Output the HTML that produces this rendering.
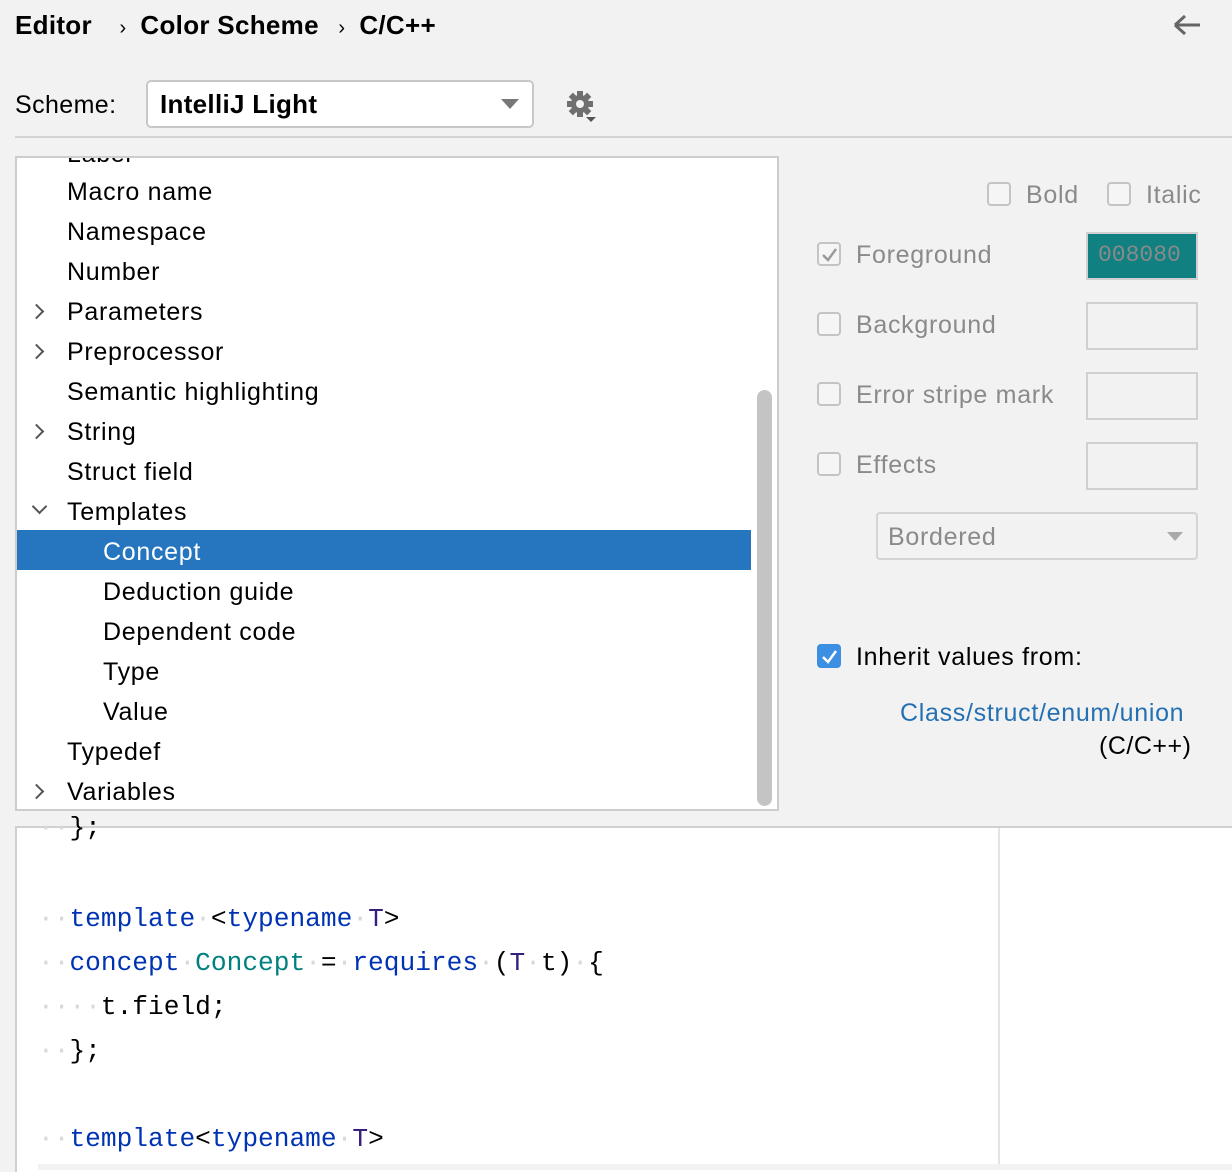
<!DOCTYPE html><html><head><style>
body{margin:0;width:1232px;height:1170px;background:#f2f2f2;font-family:"Liberation Sans",sans-serif;position:relative;overflow:hidden;color:#000}
.a{position:absolute;white-space:nowrap}
.t{font-size:25px;line-height:40px;height:40px;letter-spacing:0.7px}
.cb{position:absolute;width:24px;height:24px;border:2px solid #c4c4c4;border-radius:4px;box-sizing:border-box;background:#f5f5f5}
.g{color:#8a8a8a;font-size:25px;letter-spacing:0.7px}
.sw{position:absolute;width:112px;height:48px;border:2px solid #d0d0d0;box-sizing:border-box}
.code{font-family:"Liberation Mono",monospace;font-size:26.2px;line-height:44px}
.k{color:#0033b3}.p{color:#371f80}.c{color:#008080}.d{color:#d8d8d8}
.chev{position:absolute;width:9px;height:9px;border-right:2px solid #555;border-bottom:2px solid #555}
</style></head><body>
<div class="a" style="left:15px;top:10px;font-size:26px;font-weight:bold;letter-spacing:0.3px">Editor <span style="font-weight:normal;font-size:20px;margin:0 14px 0 20px">›</span>Color Scheme <span style="font-weight:normal;font-size:20px;margin:0 14px 0 12px">›</span>C/C++</div>
<svg class="a" style="left:1172px;top:12px" width="30" height="26"><path d="M3 13H28M3 13L13 4M3 13L13 22" stroke="#666" stroke-width="3" fill="none"/></svg>
<div class="a" style="left:15px;top:91px;font-size:25px;letter-spacing:0.4px">Scheme:</div>
<div class="a" style="left:146px;top:80px;width:388px;height:48px;box-sizing:border-box;border:2px solid #c8c8c8;border-radius:5px;background:#fff"></div>
<div class="a" style="left:160px;top:89px;font-size:26px;font-weight:bold;letter-spacing:0.3px">IntelliJ Light</div>
<svg class="a" style="left:500px;top:98px" width="20" height="12"><path d="M1 1H19L10 11Z" fill="#777"/></svg>
<svg class="a" style="left:565px;top:90px" width="34" height="34"><g transform="translate(15,14)" fill="#6f6f6f"><circle r="9"/><g id="tt"><rect x="-3" y="-13" width="6" height="26"/></g><use href="#tt" transform="rotate(45)"/><use href="#tt" transform="rotate(90)"/><use href="#tt" transform="rotate(135)"/><circle r="4" fill="#f2f2f2"/></g><path d="M21 27H31L26 32Z" fill="#555"/></svg>
<div class="a" style="left:15px;top:136px;width:1217px;height:2px;background:#d4d4d4"></div>

<div class="a" style="left:15px;top:156px;width:764px;height:655px;box-sizing:border-box;border:2px solid #cdcdcd;background:#fff;overflow:hidden">
<div class="a" style="left:0px;top:372px;width:734px;height:40px;background:#2675bf"></div>
<div class="a t" style="left:50px;top:-24px">Label</div>
<div class="a t" style="left:50px;top:14px">Macro name</div>
<div class="a t" style="left:50px;top:54px">Namespace</div>
<div class="a t" style="left:50px;top:94px">Number</div>
<div class="a t" style="left:50px;top:134px">Parameters</div>
<div class="a t" style="left:50px;top:174px">Preprocessor</div>
<div class="a t" style="left:50px;top:214px">Semantic highlighting</div>
<div class="a t" style="left:50px;top:254px">String</div>
<div class="a t" style="left:50px;top:294px">Struct field</div>
<div class="a t" style="left:50px;top:334px">Templates</div>
<div class="a t" style="left:86px;top:374px;color:#fff">Concept</div>
<div class="a t" style="left:86px;top:414px">Deduction guide</div>
<div class="a t" style="left:86px;top:454px">Dependent code</div>
<div class="a t" style="left:86px;top:494px">Type</div>
<div class="a t" style="left:86px;top:534px">Value</div>
<div class="a t" style="left:50px;top:574px">Typedef</div>
<div class="a t" style="left:50px;top:614px">Variables</div>
<div class="chev" style="left:14px;top:148px;transform:rotate(-45deg)"></div>
<div class="chev" style="left:14px;top:188px;transform:rotate(-45deg)"></div>
<div class="chev" style="left:14px;top:268px;transform:rotate(-45deg)"></div>
<div class="chev" style="left:17px;top:343px;transform:rotate(45deg)"></div>
<div class="chev" style="left:14px;top:628px;transform:rotate(-45deg)"></div>
<div class="a" style="left:740px;top:232px;width:15px;height:416px;border-radius:8px;background:#c4c4c4"></div>
</div>

<div class="cb" style="left:987px;top:182px"></div><div class="a g" style="left:1026px;top:181px">Bold</div>
<div class="cb" style="left:1107px;top:182px"></div><div class="a g" style="left:1146px;top:181px">Italic</div>
<div class="cb" style="left:817px;top:242px"></div>
<svg class="a" style="left:820px;top:245px" width="20" height="20"><path d="M3 10L8 15L16 4" stroke="#9a9a9a" stroke-width="2.5" fill="none"/></svg>
<div class="a g" style="left:856px;top:241px">Foreground</div>
<div class="sw" style="left:1086px;top:232px;background:#108080"></div>
<div class="a" style="left:1098px;top:242px;font-family:'Liberation Mono',monospace;font-size:23px;color:#8a8a8a">008080</div>
<div class="cb" style="left:817px;top:312px"></div><div class="a g" style="left:856px;top:311px">Background</div>
<div class="sw" style="left:1086px;top:302px"></div>
<div class="cb" style="left:817px;top:382px"></div><div class="a g" style="left:856px;top:381px">Error stripe mark</div>
<div class="sw" style="left:1086px;top:372px"></div>
<div class="cb" style="left:817px;top:452px"></div><div class="a g" style="left:856px;top:451px">Effects</div>
<div class="sw" style="left:1086px;top:442px"></div>
<div class="a" style="left:876px;top:512px;width:322px;height:48px;box-sizing:border-box;border:2px solid #d4d4d4;border-radius:4px"></div>
<div class="a g" style="left:888px;top:523px">Bordered</div>
<svg class="a" style="left:1166px;top:531px" width="18" height="11"><path d="M1 1H17L9 10Z" fill="#aaa"/></svg>
<div class="cb" style="left:817px;top:644px;background:#3d8fe3;border-color:#3d8fe3"></div>
<svg class="a" style="left:820px;top:647px" width="20" height="20"><path d="M3 10L8 15L16 4" stroke="#fff" stroke-width="2.5" fill="none"/></svg>
<div class="a" style="left:856px;top:643px;font-size:25px;letter-spacing:0.7px">Inherit values from:</div>
<div class="a" style="left:900px;top:699px;font-size:25px;color:#2470b3;letter-spacing:0.7px">Class/struct/enum/union</div>
<div class="a" style="left:1099px;top:732px;font-size:25px;letter-spacing:0.5px">(C/C++)</div>

<div class="a" style="left:15px;top:826px;width:1217px;height:344px;background:#fff;border-top:2px solid #d0d0d0;border-left:2px solid #d0d0d0"></div>
<div class="a" style="left:998px;top:828px;width:2px;height:342px;background:#e4e4e4"></div>
<div class="a" style="left:38px;top:1164px;width:1194px;height:6px;background:#f2f2f2"></div>
<div class="a code" style="left:38px;top:806px"><span class="d">··</span>};</div>
<div class="a code" style="left:38px;top:897px"><span class="d">··</span><span class="k">template</span><span class="d">·</span>&lt;<span class="k">typename</span><span class="d">·</span><span class="p">T</span>&gt;</div>
<div class="a code" style="left:38px;top:941px"><span class="d">··</span><span class="k">concept</span><span class="d">·</span><span class="c">Concept</span><span class="d">·</span>=<span class="d">·</span><span class="k">requires</span><span class="d">·</span>(<span class="p">T</span><span class="d">·</span>t)<span class="d">·</span>{</div>
<div class="a code" style="left:38px;top:985px"><span class="d">····</span>t.field;</div>
<div class="a code" style="left:38px;top:1029px"><span class="d">··</span>};</div>
<div class="a code" style="left:38px;top:1117px"><span class="d">··</span><span class="k">template</span>&lt;<span class="k">typename</span><span class="d">·</span><span class="p">T</span>&gt;</div>
</body></html>
